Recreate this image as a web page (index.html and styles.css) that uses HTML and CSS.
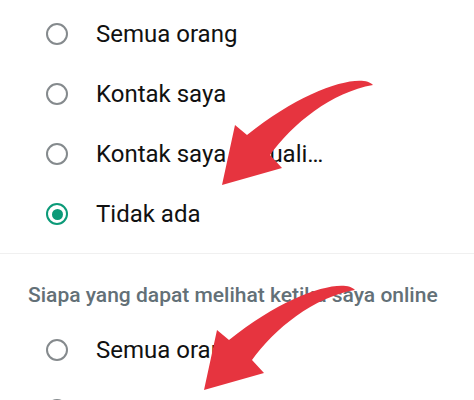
FILE: index.html
```html
<!DOCTYPE html>
<html lang="id">
  <head>
    <meta charset="UTF-8" />
    <meta name="viewport" content="width=device-width, initial-scale=1.0" />
    <title>Privasi - Terakhir dilihat</title>
    <link rel="stylesheet" href="styles.css">
  </head>
  <body>
    <div class="screen">
      <ul class="options">
        <li class="option"><span class="radio"></span><span class="label">Semua orang</span></li>
        <li class="option"><span class="radio"></span><span class="label">Kontak saya</span></li>
        <li class="option"><span class="radio"></span><span class="label">Kontak saya kecuali…</span></li>
        <li class="option"><span class="radio checked"></span><span class="label">Tidak ada</span></li>
      </ul>
      <div class="divider"></div>
      <h3 class="section-title">Siapa yang dapat melihat ketika saya online</h3>
      <ul class="options">
        <li class="option"><span class="radio"></span><span class="label">Semua orang</span></li>
        <li class="option"><span class="radio"></span><span class="label">Sama seperti Terakhir dilihat</span></li>
      </ul>

      <!-- red pointer arrows drawn over the list -->
      <svg class="arrows" width="474" height="400" viewBox="0 0 474 400">
        <defs>
          <path id="arrow" d="M373,85 C362,72 305,88 247,135 L235,125 L222,185 L282,168 L270,155 C292,124 332,92 373,85 Z" />
        </defs>
        <use href="#arrow" />
        <use href="#arrow" transform="translate(-18 205)" />
      </svg>
    </div>
  </body>
</html>
```

FILE: styles.css
```css
body {
  margin: 0;
  background-color: #ffffff;
  font-family: Roboto, "Noto Sans", sans-serif;
}
.screen {
  position: relative;
  width: 474px;
  height: 400px;
  overflow: hidden;
}
.options {
  list-style: none;
  margin: 0;
  padding: 4px 0 0 0;
}
.option {
  display: flex;
  align-items: center;
  height: 60px;
  padding-left: 46px;
}
.radio {
  width: 18px;
  height: 18px;
  border: 2.5px solid #858a8d;
  border-radius: 50%;
  margin-right: 28px;
  flex-shrink: 0;
  display: flex;
  align-items: center;
  justify-content: center;
}
.radio.checked {
  border-color: #0b9a78;
}
.radio.checked::after {
  content: "";
  width: 11px;
  height: 11px;
  border-radius: 50%;
  background-color: #0b9a78;
}
.label {
  font-size: 24px;
  color: #111111;
  white-space: nowrap;
}
.divider {
  height: 1px;
  background-color: #f0f0f0;
  margin-top: 9px;
}
.section-title {
  margin: 27px 0 11px 28px;
  font-size: 21px;
  line-height: 28px;
  font-weight: 500;
  color: #637077;
  white-space: nowrap;
}
.section-title + .options {
  padding-top: 0;
}
.arrows {
  position: absolute;
  left: 0;
  top: 0;
  fill: #e6343f;
  pointer-events: none;
}
```
